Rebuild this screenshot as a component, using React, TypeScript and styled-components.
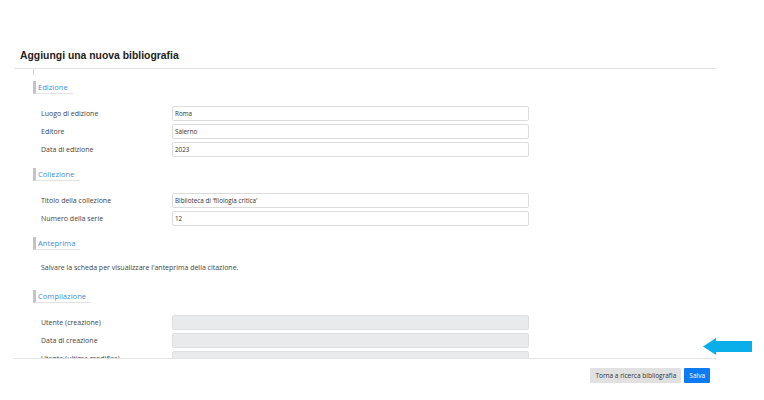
import React from 'react';
import styled, { createGlobalStyle } from 'styled-components';

const GlobalStyle = createGlobalStyle`
  html, body {
    margin: 0;
    padding: 0;
    background: #ffffff;
    font-family: "Open Sans", "Noto Sans", sans-serif;
  }
`;

type Field = { label: string; value?: string; disabled?: boolean };

const sections: { title: string; fields?: Field[]; note?: string }[] = [
  {
    title: 'Edizione',
    fields: [
      { label: 'Luogo di edizione', value: 'Roma' },
      { label: 'Editore', value: 'Salerno' },
      { label: 'Data di edizione', value: '2023' },
    ],
  },
  {
    title: 'Collezione',
    fields: [
      { label: 'Titolo della collezione', value: "Biblioteca di 'filologia critica'" },
      { label: 'Numero della serie', value: '12' },
    ],
  },
  {
    title: 'Anteprima',
    note: "Salvare la scheda per visualizzare l'anteprima della citazione.",
  },
  {
    title: 'Compilazione',
    fields: [
      { label: 'Utente (creazione)', disabled: true },
      { label: 'Data di creazione', disabled: true },
      { label: 'Utente (ultima modifica)', disabled: true },
    ],
  },
];

const App: React.FC = () => {
  return (
    <Page>
      <GlobalStyle />
      <Dialog>
        <Header>
          <Title>Aggiungi una nuova bibliografia</Title>
        </Header>
        <Body>
          <Marker />
          {sections.map((s) => (
            <Section key={s.title}>
              <SectionTitle>{s.title}</SectionTitle>
              {s.fields && (
                <Rows>
                  {s.fields.map((f) => (
                    <Row key={f.label}>
                      <Label>{f.label}</Label>
                      <Input $disabled={f.disabled}>{f.value}</Input>
                    </Row>
                  ))}
                </Rows>
              )}
              {s.note && <Note>{s.note}</Note>}
            </Section>
          ))}
        </Body>
        <Footer>
          <Button>Torna a ricerca bibliografia</Button>
          <Button $primary>Salva</Button>
        </Footer>
      </Dialog>
      <Arrow width="50" height="18" viewBox="0 0 50 18">
        <path d="M0 8.5 L13 0 L13 3 L49 3 L49 14 L13 14 L13 17 Z" fill="#0aaee8" />
      </Arrow>
    </Page>
  );
};

const Page = styled.div`
  position: relative;
  width: 764px;
  height: 400px;
  overflow: hidden;
`;

const Dialog = styled.div`
  width: 703px;
  margin-left: 14px;
  display: flex;
  flex-direction: column;
`;

const Header = styled.div`
  height: 69px;
  box-sizing: border-box;
  padding: 49px 0 0 6px;
  border-bottom: 1px solid #e4e4e4;
`;

const Title = styled.h1`
  margin: 0;
  font-family: "Liberation Sans", Arial, sans-serif;
  font-weight: 700;
  font-size: 10.4px;
  line-height: 14px;
  color: #222;
`;

const Body = styled.div`
  height: 289px;
  overflow: hidden;
  padding-left: 19px;
  border-bottom: 1px solid #e4e4e4;
  display: flex;
  flex-direction: column;
`;

const Marker = styled.div`
  flex: none;
  width: 0;
  height: 6px;
  border-left: 1px solid #cfcfcf;
`;

const Section = styled.section`
  flex: none;
  display: flex;
  flex-direction: column;
  align-items: stretch;
  margin-top: 6px;
  & + & {
    margin-top: 11px;
  }
`;

const SectionTitle = styled.h2`
  align-self: flex-start;
  margin: 0;
  padding: 1px 5px 0 2px;
  border-left: 3px solid #c4c4c4;
  border-bottom: 1px solid #e2e2e2;
  font-size: 7.6px;
  font-weight: 400;
  line-height: 11px;
  color: #3f8fd5;
`;

const Rows = styled.div`
  margin-top: 12px;
  display: flex;
  flex-direction: column;
  gap: 3px;
`;

const Row = styled.div`
  display: grid;
  grid-template-columns: 131px 357px;
  align-items: center;
  padding-left: 8px;
`;

const Label = styled.span`
  font-size: 7px;
  line-height: 15px;
  color: #444;
`;

const Input = styled.div<{ $disabled?: boolean }>`
  height: 15px;
  box-sizing: border-box;
  padding: 0 2px;
  border: 1px solid ${(p) => (p.$disabled ? '#dedfe1' : '#dcdcdc')};
  border-radius: 2px;
  background: ${(p) => (p.$disabled ? '#e8eaec' : '#ffffff')};
  font-size: 6.3px;
  line-height: 13px;
  color: #333;
`;

const Note = styled.p`
  margin: 12px 0 5px 8px;
  font-size: 7px;
  line-height: 12px;
  color: #444;
`;

const Footer = styled.div`
  display: flex;
  justify-content: flex-end;
  gap: 3px;
  padding: 9px 7px 0 0;
`;

const Button = styled.button<{ $primary?: boolean }>`
  height: 15px;
  padding: 0 5px;
  border: none;
  border-radius: 1px;
  background: ${(p) => (p.$primary ? '#0d7cf2' : '#e1e1e1')};
  color: ${(p) => (p.$primary ? '#ffffff' : '#333')};
  font-family: "Open Sans", sans-serif;
  font-size: 6.5px;
  line-height: 15px;
`;

const Arrow = styled.svg`
  position: absolute;
  left: 703px;
  top: 338px;
`;

export default App;
